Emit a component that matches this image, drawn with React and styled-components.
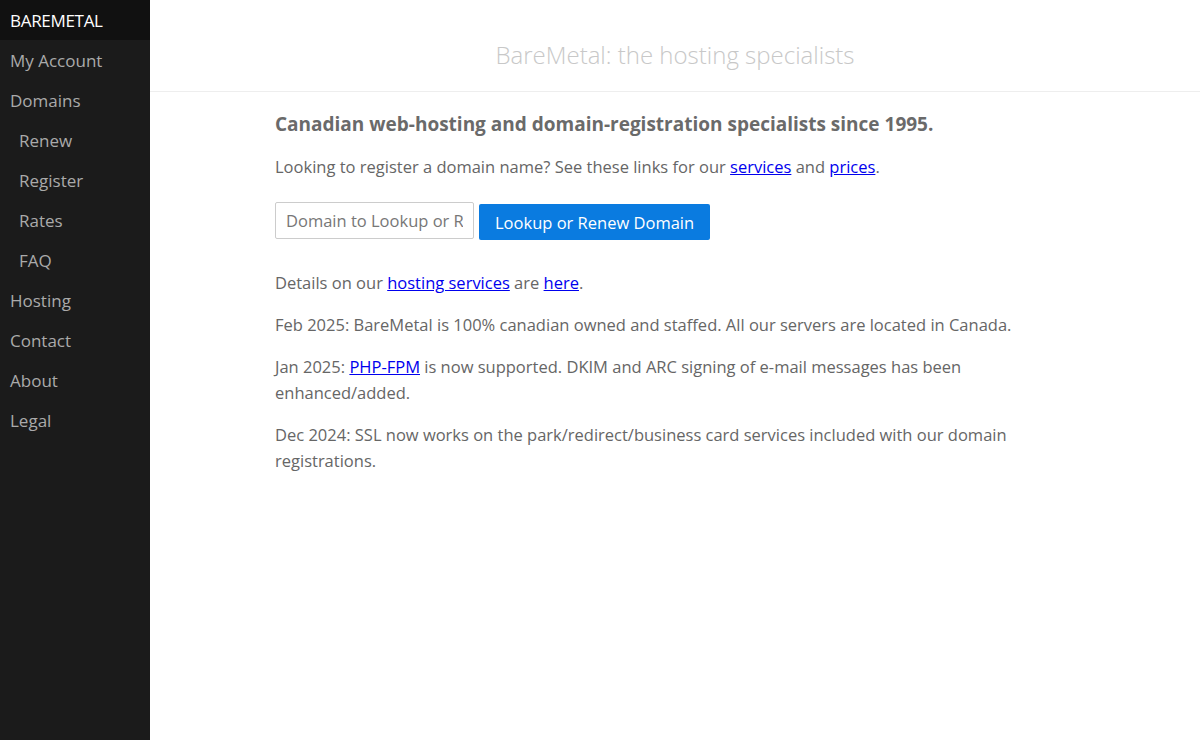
import React from 'react';
import styled, { createGlobalStyle } from 'styled-components';

const GlobalStyle = createGlobalStyle`
  html, body {
    margin: 0;
    padding: 0;
    background: #fff;
  }

  body {
    font-family: 'Open Sans', 'Noto Sans', sans-serif;
    font-size: 16.5px;
    line-height: 26px;
    color: #666;
  }

  a {
    color: #0000ee;
  }
`;

const StyledLayout = styled.div`
  display: flex;
  min-height: 740px;
`;

const StyledSidebar = styled.nav`
  flex: 0 0 150px;
  background: #1b1b1b;
  display: flex;
  flex-direction: column;
`;

const NavItem = styled.a`
  display: block;
  height: 40px;
  line-height: 41px;
  padding-left: ${({ $sub }) => ($sub ? '19px' : '10px')};
  font-size: 17px;
  color: ${({ $brand }) => ($brand ? '#fff' : '#aaa')};
  background: ${({ $brand }) => ($brand ? '#111' : 'transparent')};
  text-decoration: none;
  text-transform: ${({ $brand }) => ($brand ? 'uppercase' : 'none')};
  letter-spacing: ${({ $brand }) => ($brand ? '-0.3px' : '0')};
`;

const StyledMain = styled.main`
  flex: 1;
  min-width: 0;
`;

const StyledHeader = styled.header`
  height: 91px;
  border-bottom: 1px solid #eee;
  display: flex;
  align-items: center;
  justify-content: center;

  h1 {
    margin: 18px 0 0;
    font-size: 24px;
    line-height: 32px;
    font-weight: 300;
    color: #c8c8c8;
  }
`;

const StyledContent = styled.div`
  width: 800px;
  margin: 0 auto;
  padding-top: 18px;

  h2 {
    margin: 0 0 16px;
    font-size: 19px;
    font-weight: 700;
    line-height: 28px;
    color: #6a6a6a;
  }

  p {
    margin: 0 0 16px;
  }
`;

const LookupForm = styled.form`
  display: flex;
  align-items: flex-end;
  gap: 5px;
  margin: 22px 0 30px;
`;

const DomainInput = styled.input`
  box-sizing: border-box;
  width: 199px;
  height: 37px;
  margin-bottom: 1px;
  padding: 0 10px;
  border: 1px solid #ccc;
  border-radius: 2px;
  font-family: inherit;
  font-size: 16.5px;
  color: #666;

  &::placeholder {
    color: #777;
  }
`;

const LookupButton = styled.button`
  height: 36px;
  padding: 0 16px;
  border: none;
  border-radius: 2px;
  background: #0a7be0;
  color: #fff;
  font-family: inherit;
  font-size: 16.5px;
  cursor: pointer;
`;

const nav = [
  { label: 'My Account' },
  { label: 'Domains' },
  { label: 'Renew', sub: true },
  { label: 'Register', sub: true },
  { label: 'Rates', sub: true },
  { label: 'FAQ', sub: true },
  { label: 'Hosting' },
  { label: 'Contact' },
  { label: 'About' },
  { label: 'Legal' },
];

const App = () => (
  <>
    <GlobalStyle />
    <StyledLayout>
      <StyledSidebar>
        <NavItem $brand href="#">BareMetal</NavItem>
        {nav.map(item => (
          <NavItem key={item.label} $sub={item.sub} href="#">
            {item.label}
          </NavItem>
        ))}
      </StyledSidebar>

      <StyledMain>
        <StyledHeader>
          <h1>BareMetal: the hosting specialists</h1>
        </StyledHeader>

        <StyledContent>
          <h2>Canadian web-hosting and domain-registration specialists since 1995.</h2>
          <p>
            Looking to register a domain name? See these links for our <a href="#">services</a> and{' '}
            <a href="#">prices</a>.
          </p>

          <LookupForm onSubmit={e => e.preventDefault()}>
            <DomainInput type="text" placeholder="Domain to Lookup or Renew" />
            <LookupButton type="submit">Lookup or Renew Domain</LookupButton>
          </LookupForm>

          <p>
            Details on our <a href="#">hosting services</a> are <a href="#">here</a>.
          </p>
          <p>
            Feb 2025: BareMetal is 100% canadian owned and staffed. All our servers are located in
            Canada.
          </p>
          <p>
            Jan 2025: <a href="#">PHP-FPM</a> is now supported. DKIM and ARC signing of e-mail
            messages has been enhanced/added.
          </p>
          <p>
            Dec 2024: SSL now works on the park/redirect/business card services included with our
            domain registrations.
          </p>
        </StyledContent>
      </StyledMain>
    </StyledLayout>
  </>
);

export default App;
